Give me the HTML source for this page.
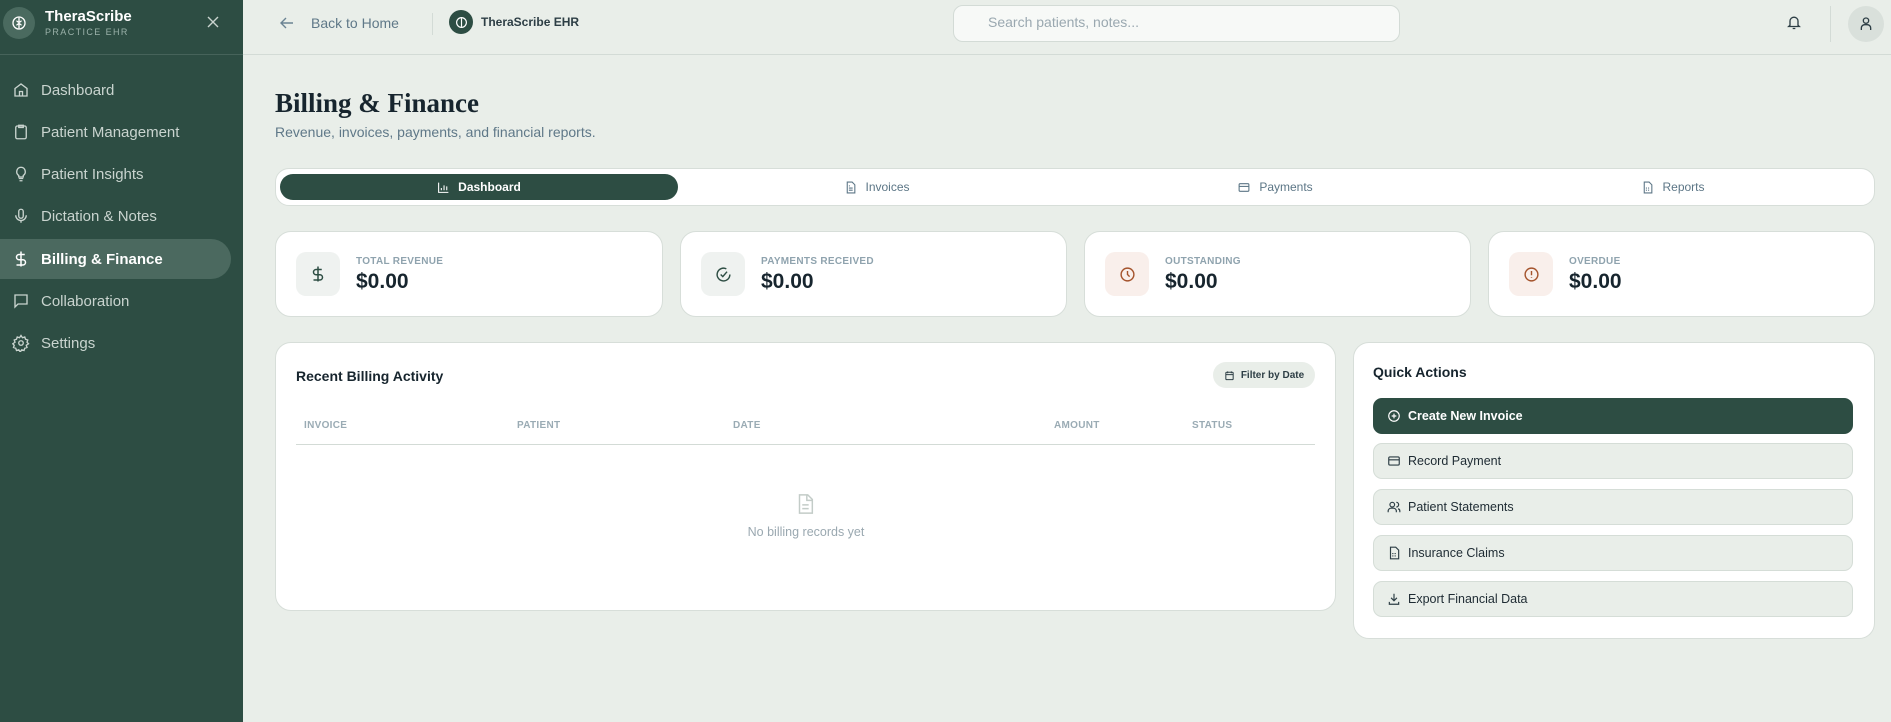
<!DOCTYPE html>
<html><head><meta charset="utf-8"><style>
*{box-sizing:border-box;margin:0;padding:0}
body{width:1891px;height:722px;overflow:hidden;background:#e9eee9;font-family:"Liberation Sans",sans-serif;position:relative;color:#1e2b33}
.abs{position:absolute}
.sb{left:0;top:0;width:243px;height:722px;background:#2d4d43}
.nav{position:absolute;left:0;width:231px;height:40px;display:flex;align-items:center;color:#c9d4cf;font-size:15px}
.nav svg{position:absolute;left:12px}
.nav span{position:absolute;left:41px}
.nav.act{background:#4b695f;border-radius:0 20px 20px 0;color:#fff;font-weight:bold}
.card{position:absolute;background:#fff;border:1px solid #d7ded9;border-radius:16px}
.ic{position:absolute;left:20px;top:20px;width:44px;height:44px;border-radius:10px;display:flex;align-items:center;justify-content:center}
.lbl{position:absolute;left:80px;top:24px;font-size:10px;font-weight:bold;color:#8fa3ae;letter-spacing:.3px}
.val{position:absolute;left:80px;top:38px;font-size:21px;font-weight:bold;color:#17252e}
.tab{position:absolute;top:174px;height:26px;display:flex;align-items:center;justify-content:center;gap:8px;font-size:12px;color:#5c7686}
.th{position:absolute;top:420px;font-size:10px;font-weight:bold;color:#9aabb4;letter-spacing:.3px}
.qa{position:absolute;left:1373px;width:480px;height:36px;border-radius:9px;background:#e9eee9;border:1px solid #d5ddd7;display:flex;align-items:center;font-size:12.5px;color:#1e2b33}
.qa svg{position:absolute;left:13px}
.qa span{position:absolute;left:34px}
</style></head><body>
<div class="abs sb"></div>
<div class="abs" style="left:3px;top:7px;width:32px;height:32px;border-radius:50%;background:#4a6a5f;display:flex;align-items:center;justify-content:center">
<svg width="16" height="16" viewBox="0 0 24 24" fill="none" stroke="#fff" stroke-width="2"><circle cx="12" cy="12" r="9"/><path d="M12 4v16M8 9c2 0 2 2 4 2M16 9c-2 0-2 2-4 2M8 15c2 0 2-2 4-2M16 15c-2 0-2-2-4-2"/></svg></div>
<div class="abs" style="left:45px;top:8px;color:#fff;font-weight:bold;font-size:15px">TheraScribe</div>
<div class="abs" style="left:45px;top:27px;color:#9bb2aa;font-size:9px;letter-spacing:1.4px">PRACTICE EHR</div>
<svg class="abs" style="left:207px;top:16px" width="12" height="12" viewBox="0 0 12 12" stroke="#c9d4cf" stroke-width="1.4"><path d="M1 1l10 10M11 1L1 11"/></svg>
<div class="abs" style="left:0;top:54px;width:243px;height:1px;background:#46635a"></div>

<div class="nav" style="top:70px"><svg width="18" height="18" viewBox="0 0 24 24" fill="none" stroke="#c9d4cf" stroke-width="1.8"><path d="M4 10l8-6 8 6v10H4z"/><path d="M10 20v-6h4v6"/></svg><span>Dashboard</span></div>
<div class="nav" style="top:112px"><svg width="18" height="18" viewBox="0 0 24 24" fill="none" stroke="#c9d4cf" stroke-width="1.8"><rect x="5" y="4" width="14" height="17" rx="2"/><path d="M9 3h6v3H9z"/></svg><span>Patient Management</span></div>
<div class="nav" style="top:154px"><svg width="18" height="18" viewBox="0 0 24 24" fill="none" stroke="#c9d4cf" stroke-width="1.8"><path d="M9 18h6M10 21h4M12 3a6 6 0 0 0-3 11v2h6v-2a6 6 0 0 0-3-11z"/></svg><span>Patient Insights</span></div>
<div class="nav" style="top:196px"><svg width="18" height="18" viewBox="0 0 24 24" fill="none" stroke="#c9d4cf" stroke-width="1.8"><rect x="9" y="3" width="6" height="12" rx="3"/><path d="M5 11a7 7 0 0 0 14 0M12 18v3"/></svg><span>Dictation &amp; Notes</span></div>
<div class="nav act" style="top:239px"><svg width="18" height="18" viewBox="0 0 24 24" fill="none" stroke="#fff" stroke-width="2"><path d="M12 2v20M17 6H9.5a3.5 3.5 0 0 0 0 7h5a3.5 3.5 0 0 1 0 7H6"/></svg><span>Billing &amp; Finance</span></div>
<div class="nav" style="top:281px"><svg width="18" height="18" viewBox="0 0 24 24" fill="none" stroke="#c9d4cf" stroke-width="1.8"><path d="M4 4h16v12H8l-4 4z"/></svg><span>Collaboration</span></div>
<div class="nav" style="top:323px"><svg width="18" height="18" viewBox="0 0 24 24" fill="none" stroke="#c9d4cf" stroke-width="1.8"><circle cx="12" cy="12" r="3"/><path d="M12 2l2 3 3-1 1 3 3 1-1 3 2 2-3 2 1 3-3 1-1 3-3-1-2 3-2-3-3 1-1-3-3-1 1-3-2-2 3-2-1-3 3-1 1-3 3 1z"/></svg><span>Settings</span></div>

<!-- topbar -->
<div class="abs" style="left:243px;top:54px;width:1648px;height:1px;background:#d3dbd6"></div>
<svg class="abs" style="left:280px;top:16px" width="14" height="14" viewBox="0 0 14 14" fill="none" stroke="#6b8393" stroke-width="1.4"><path d="M13 7H1M6 2L1 7l5 5"/></svg>
<div class="abs" style="left:311px;top:15px;font-size:14px;color:#5f7888">Back to Home</div>
<div class="abs" style="left:432px;top:13px;width:1px;height:22px;background:#d3dbd6"></div>
<div class="abs" style="left:449px;top:10px;width:24px;height:24px;border-radius:50%;background:#2d4d43;display:flex;align-items:center;justify-content:center"><svg width="13" height="13" viewBox="0 0 24 24" fill="none" stroke="#fff" stroke-width="2.2"><circle cx="12" cy="12" r="9"/><path d="M12 4v16"/></svg></div>
<div class="abs" style="left:481px;top:15px;font-size:12px;font-weight:bold;color:#2d3e45">TheraScribe EHR</div>
<div class="abs" style="left:953px;top:5px;width:447px;height:37px;border-radius:10px;background:#f7f9f7;border:1px solid #d3dbd6"></div>
<div class="abs" style="left:988px;top:14px;font-size:14px;color:#9aa8b0">Search patients, notes...</div>
<svg class="abs" style="left:1786px;top:14px" width="16" height="17" viewBox="0 0 24 24" fill="none" stroke="#2d3e45" stroke-width="2"><path d="M6 16V10a6 6 0 0 1 12 0v6l2 2H4zM10 21h4"/></svg>
<div class="abs" style="left:1830px;top:6px;width:1px;height:36px;background:#d3dbd6"></div>
<div class="abs" style="left:1848px;top:6px;width:36px;height:36px;border-radius:50%;background:#d9e0db;display:flex;align-items:center;justify-content:center"><svg width="16" height="16" viewBox="0 0 24 24" fill="none" stroke="#2d3e45" stroke-width="2"><circle cx="12" cy="7" r="4"/><path d="M5 21v-3a5 5 0 0 1 5-5h4a5 5 0 0 1 5 5v3"/></svg></div>

<!-- title -->
<div class="abs" style="left:275px;top:88px;font-family:'Liberation Serif',serif;font-weight:bold;font-size:27px;color:#17252e">Billing &amp; Finance</div>
<div class="abs" style="left:275px;top:124px;font-size:14px;color:#5f7888">Revenue, invoices, payments, and financial reports.</div>

<!-- tabs -->
<div class="abs" style="left:275px;top:168px;width:1600px;height:38px;background:#fff;border:1px solid #d7ded9;border-radius:14px"></div>
<div class="abs" style="left:280px;top:174px;width:398px;height:26px;background:#2d4d43;border-radius:13px"></div>
<div class="tab" style="left:280px;width:398px;color:#fff;font-weight:bold"><svg width="13" height="13" viewBox="0 0 24 24" fill="none" stroke="#fff" stroke-width="2"><path d="M3 3v18h18M8 17v-4M13 17V8M18 17v-7"/></svg>Dashboard</div>
<div class="tab" style="left:678px;width:398px"><svg width="13" height="13" viewBox="0 0 24 24" fill="none" stroke="#5c7686" stroke-width="2"><path d="M6 2h9l5 5v15H6zM9 13h7M9 17h7M9 9h2"/></svg>Invoices</div>
<div class="tab" style="left:1076px;width:398px"><svg width="14" height="13" viewBox="0 0 24 24" fill="none" stroke="#5c7686" stroke-width="2"><rect x="3" y="5" width="18" height="14" rx="2"/><path d="M3 10h18"/></svg>Payments</div>
<div class="tab" style="left:1474px;width:398px"><svg width="13" height="13" viewBox="0 0 24 24" fill="none" stroke="#5c7686" stroke-width="2"><path d="M6 2h9l5 5v15H6zM9 13h2M13 13h2M9 17h2M13 17h2"/></svg>Reports</div>

<!-- stats -->
<div class="card" style="left:275px;top:231px;width:388px;height:86px">
<div class="ic" style="background:#eff2f0"><svg width="18" height="18" viewBox="0 0 24 24" fill="none" stroke="#2d4d43" stroke-width="2"><path d="M12 2v20M17 6H9.5a3.5 3.5 0 0 0 0 7h5a3.5 3.5 0 0 1 0 7H6"/></svg></div>
<div class="lbl">TOTAL REVENUE</div><div class="val">$0.00</div></div>
<div class="card" style="left:680px;top:231px;width:387px;height:86px">
<div class="ic" style="background:#eff2f0"><svg width="17" height="17" viewBox="0 0 24 24" fill="none" stroke="#2d4d43" stroke-width="2"><path d="M21 12a9 9 0 1 1-5-8"/><path d="M8 12l3 3 6-7"/></svg></div>
<div class="lbl">PAYMENTS RECEIVED</div><div class="val">$0.00</div></div>
<div class="card" style="left:1084px;top:231px;width:387px;height:86px">
<div class="ic" style="background:#f9efeb"><svg width="17" height="17" viewBox="0 0 24 24" fill="none" stroke="#a4532c" stroke-width="2"><circle cx="12" cy="12" r="9"/><path d="M12 7v5l3 3"/></svg></div>
<div class="lbl">OUTSTANDING</div><div class="val">$0.00</div></div>
<div class="card" style="left:1488px;top:231px;width:387px;height:86px">
<div class="ic" style="background:#f9efeb"><svg width="17" height="17" viewBox="0 0 24 24" fill="none" stroke="#a4532c" stroke-width="2"><circle cx="12" cy="12" r="9"/><path d="M12 7v6M12 16v1"/></svg></div>
<div class="lbl">OVERDUE</div><div class="val">$0.00</div></div>

<!-- recent -->
<div class="card" style="left:275px;top:342px;width:1061px;height:269px"></div>
<div class="abs" style="left:296px;top:368px;font-size:14px;font-weight:bold;color:#17252e">Recent Billing Activity</div>
<div class="abs" style="left:1213px;top:362px;width:102px;height:26px;border-radius:13px;background:#e9eee9;display:flex;align-items:center;justify-content:center;gap:6px;font-size:10px;font-weight:bold;color:#2d3e45"><svg width="11" height="11" viewBox="0 0 24 24" fill="none" stroke="#2d3e45" stroke-width="2.2"><rect x="4" y="5" width="16" height="16" rx="2"/><path d="M4 10h16M8 3v4M16 3v4"/></svg>Filter by Date</div>
<div class="th" style="left:304px">INVOICE</div>
<div class="th" style="left:517px">PATIENT</div>
<div class="th" style="left:733px">DATE</div>
<div class="th" style="left:1054px">AMOUNT</div>
<div class="th" style="left:1192px">STATUS</div>
<div class="abs" style="left:296px;top:444px;width:1019px;height:1px;background:#d3dbd6"></div>
<svg class="abs" style="left:794px;top:492px" width="22" height="24" viewBox="0 0 24 24" fill="none" stroke="#c3ccc8" stroke-width="1.6"><path d="M6 2h9l5 5v15H6zM14 2v6h6M9 13h7M9 17h7"/></svg>
<div class="abs" style="left:700px;top:525px;width:212px;text-align:center;font-size:12.5px;color:#9aa8b0">No billing records yet</div>

<!-- quick actions -->
<div class="card" style="left:1353px;top:342px;width:522px;height:297px"></div>
<div class="abs" style="left:1373px;top:364px;font-size:14px;font-weight:bold;color:#17252e">Quick Actions</div>
<div class="qa" style="top:398px;background:#2d4d43;border-color:#2d4d43;color:#fff;font-weight:bold"><svg width="14" height="14" viewBox="0 0 24 24" fill="none" stroke="#fff" stroke-width="2"><circle cx="12" cy="12" r="9"/><path d="M12 8v8M8 12h8"/></svg><span>Create New Invoice</span></div>
<div class="qa" style="top:443px"><svg width="14" height="14" viewBox="0 0 24 24" fill="none" stroke="#2d3e45" stroke-width="2"><rect x="3" y="5" width="18" height="14" rx="2"/><path d="M3 10h18"/></svg><span>Record Payment</span></div>
<div class="qa" style="top:489px"><svg width="14" height="14" viewBox="0 0 24 24" fill="none" stroke="#2d3e45" stroke-width="2"><circle cx="9" cy="8" r="4"/><path d="M2 21v-2a5 5 0 0 1 5-5h4a5 5 0 0 1 5 5v2M16 4a4 4 0 0 1 0 8M22 21v-2a4 4 0 0 0-3-4"/></svg><span>Patient Statements</span></div>
<div class="qa" style="top:535px"><svg width="14" height="14" viewBox="0 0 24 24" fill="none" stroke="#2d3e45" stroke-width="2"><path d="M6 2h9l5 5v15H6zM9 13h2M13 13h2M9 17h2M13 17h2"/></svg><span>Insurance Claims</span></div>
<div class="qa" style="top:581px"><svg width="14" height="14" viewBox="0 0 24 24" fill="none" stroke="#2d3e45" stroke-width="2"><path d="M12 3v12M7 10l5 5 5-5M4 17v4h16v-4"/></svg><span>Export Financial Data</span></div>
</body></html>
